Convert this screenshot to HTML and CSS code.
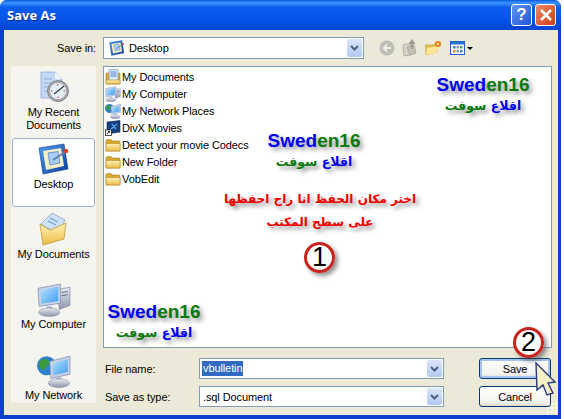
FILE: index.html
```html
<!DOCTYPE html>
<html>
<head>
    <title>Save As</title>
    <link rel="stylesheet" href="styles.css">
</head>
<body>
    <!-- shared icons, drawn once and reused at large and small sizes -->
    <svg class="icon-defs" width="0" height="0">
        <defs>
            <linearGradient id="gFolder" x1="0" y1="0" x2="0" y2="1">
                <stop offset="0" stop-color="#fff3b8"/>
                <stop offset="1" stop-color="#eebb45"/>
            </linearGradient>
            <linearGradient id="gScreen" x1="0" y1="0" x2="1" y2="1">
                <stop offset="0" stop-color="#b8e4ff"/>
                <stop offset="1" stop-color="#3f9bf0"/>
            </linearGradient>
            <linearGradient id="gGrey" x1="0" y1="0" x2="0" y2="1">
                <stop offset="0" stop-color="#e8ecf4"/>
                <stop offset="1" stop-color="#8d95aa"/>
            </linearGradient>
            <linearGradient id="gBlue" x1="0" y1="0" x2="1" y2="1">
                <stop offset="0" stop-color="#4f9cf0"/>
                <stop offset="1" stop-color="#0d3f9e"/>
            </linearGradient>
        </defs>
        <symbol id="i-folder" viewBox="0 0 16 16">
            <path d="M1 4 Q1 2.5 2.5 2.5 H6 L7.500 4 H14 Q15 4 15 5 V14 H1 Z" fill="#d9a72c" stroke="#a88122" stroke-width=".6"/>
            <path d="M1 6.500 H15 V14 H1 Z" fill="url(#gFolder)" stroke="#b58c28" stroke-width=".6"/>
        </symbol>
        <symbol id="i-mydocs-small" viewBox="0 0 16 16">
            <path d="M1 4 H15 V15 H1 Z" fill="#dcae3a" stroke="#a88122" stroke-width=".6"/>
            <path d="M4 .500 H13 V12 H4 Z" fill="#d8e6fa" stroke="#6f8fc2" stroke-width=".6"/>
            <path d="M5.500 3 H11.500 M5.500 5 H11.500 M5.500 7 H11.500" stroke="#4f7cc4" stroke-width=".9"/>
            <path d="M1 11 H15 V15 H1 Z" fill="url(#gFolder)" stroke="#b58c28" stroke-width=".6"/>
        </symbol>
        <symbol id="i-computer" viewBox="0 0 32 32">
            <path d="M19 6 L31 4 V21 L21 25 Z" fill="url(#gGrey)" stroke="#7b829a" stroke-width=".6"/>
            <path d="M23 9 L29 8 M23 12 L29 11" stroke="#6b7288" stroke-width="1"/>
            <path d="M1 5 L22 1 V19 L2 22 Z" fill="#c9d2e4" stroke="#7b8fb6" stroke-width=".7"/>
            <path d="M3.500 7 L20 3.500 V17 L4 19.500 Z" fill="url(#gScreen)"/>
            <path d="M9 22 H14 V26 H9 Z" fill="#aab1c4"/>
            <ellipse cx="11.500" cy="27.500" rx="10" ry="4" fill="url(#gGrey)" stroke="#848ba0" stroke-width=".5"/>
        </symbol>
        <symbol id="i-network" viewBox="0 0 32 32">
            <circle cx="9" cy="11" r="9" fill="#2f7fd0"/>
            <path d="M3 6 Q8 3 11 6 Q13 10 9 12 Q7 17 4 14 Q1 10 3 6 Z M13 13 Q17 13 15 18 Q12 19 13 13 Z" fill="#3c9a3c"/>
            <path d="M12 7 L31 2 V19 L13 23 Z" fill="#c9d2e4" stroke="#7b8fb6" stroke-width=".7"/>
            <path d="M14.500 9 L29 5 V17 L15 20 Z" fill="url(#gScreen)"/>
            <path d="M18 22 H23 V26 H18 Z" fill="#aab1c4"/>
            <ellipse cx="20.500" cy="27.500" rx="10" ry="4" fill="url(#gGrey)" stroke="#848ba0" stroke-width=".5"/>
        </symbol>
        <symbol id="i-desktop" viewBox="0 0 32 32">
            <path d="M1 5 L26 1 L30 26 L5 31 Z" fill="url(#gBlue)" stroke="#0c3a8e" stroke-width=".6"/>
            <path d="M5 8 L23 5 L26 23 L8 27 Z" fill="#f7efc4"/>
            <path d="M10 10 L20 8.500 L22 20 L12 22 Z" fill="#a9cdf4" stroke="#3f76c4" stroke-width=".7"/>
            <path d="M15 17 L27 9" stroke="#5f7fb4" stroke-width="2"/>
            <circle cx="28" cy="8" r="2.200" fill="#d8402a"/>
        </symbol>
    </svg>

    <div class="window">
        <div class="titlebar">
            <span class="title">Save As</span>
            <div class="caption-buttons">
                <div class="caption-btn help">?</div>
                <div class="caption-btn close">
                    <svg width="14" height="14" viewBox="0 0 14 14"><path d="M2 2 L12 12 M12 2 L2 12" stroke="#fff" stroke-width="2.600"/></svg>
                </div>
            </div>
        </div>

        <div class="client">
            <div class="top-row">
                <label class="save-in">Save in:</label>
                <div class="combo combo-wide">
                    <svg class="combo-icon" width="16" height="16"><use href="#i-desktop"/></svg>
                    <span class="combo-text">Desktop</span>
                    <div class="combo-arrow"><svg width="9" height="6" viewBox="0 0 9 6"><path d="M1 1 L4.500 4.500 L8 1" fill="none" stroke="#4d6185" stroke-width="2"/></svg></div>
                </div>
                <div class="toolbar">
                    <svg width="16" height="16" viewBox="0 0 16 16">
                        <circle cx="8" cy="8" r="7.500" fill="#bdbdb8"/>
                        <path d="M12 8 H5 M8 4.500 L4.500 8 L8 11.500" fill="none" stroke="#f1f1ec" stroke-width="1.800"/>
                    </svg>
                    <svg width="16" height="18" viewBox="0 0 16 18">
                        <path d="M1 6 L9 4 V16 L2 17 Z" fill="#d5d4cc" stroke="#a8a79f" stroke-width=".8"/>
                        <path d="M5 8 L12 6 L14 14 L8 16 Z" fill="#c3c2b9" stroke="#a3a29a" stroke-width=".8"/>
                        <path d="M10 10 V3 M7.500 5 L10 1.500 L12.500 5" fill="none" stroke="#9b9a92" stroke-width="1.800"/>
                    </svg>
                    <svg width="17" height="16" viewBox="0 0 17 16">
                        <path d="M0.500 5 H8 L12 3 V12 L1 15 Z" fill="#e6c04c" stroke="#c39a2a" stroke-width=".6"/>
                        <path d="M2 8 L14 6 L11 13 L1 15 Z" fill="#fbe795"/>
                        <circle cx="13" cy="4" r="3" fill="#ef7a22"/>
                        <circle cx="13" cy="4" r="1.200" fill="#ffe36a"/>
                    </svg>
                    <div class="views">
                        <svg width="15" height="14" viewBox="0 0 15 14">
                            <rect x=".5" y=".5" width="14" height="13" fill="#fff" stroke="#1f64c8"/>
                            <rect x="1" y="1" width="13" height="2.500" fill="#2a74d8"/>
                            <rect x="3" y="5" width="2.500" height="2.500" fill="#3b7fd8"/>
                            <rect x="6.500" y="5" width="2.500" height="2.500" fill="#8a97a8"/>
                            <rect x="10" y="5" width="2.500" height="2.500" fill="#4aa54a"/>
                            <rect x="3" y="9" width="2.500" height="2.500" fill="#e8882c"/>
                            <rect x="6.500" y="9" width="2.500" height="2.500" fill="#8a97a8"/>
                            <rect x="10" y="9" width="2.500" height="2.500" fill="#3b7fd8"/>
                        </svg>
                        <span class="views-arrow"></span>
                    </div>
                </div>
            </div>

            <div class="body-row">
                <div class="places">
                    <div class="place place-tall">
                        <svg width="32" height="32" viewBox="0 0 32 32">
                            <path d="M3 1 H17 L24 8 V27 H3 Z" fill="#c5d9f4" stroke="#86a5d4" stroke-width=".7"/>
                            <path d="M17 1 V8 H24 Z" fill="#eef4fd"/>
                            <path d="M6 8 H14 M6 12 H13 M6 16 H11 M6 20 H11" stroke="#8fb0de" stroke-width="1.200"/>
                            <circle cx="20" cy="20" r="10.500" fill="#a7a9ad" stroke="#6f7278" stroke-width=".8"/>
                            <circle cx="20" cy="20" r="8" fill="#e3eefb"/>
                            <path d="M20 20 L26 15 M20 20 L16 23" stroke="#3b3b40" stroke-width="1.200"/>
                            <path d="M20 13 V14.500 M27 20 H25.500 M20 27 V25.500 M13 20 H14.500" stroke="#d04a3a"/>
                        </svg>
                        <span>My Recent<br>Documents</span>
                    </div>
                    <div class="place selected">
                        <svg width="32" height="32"><use href="#i-desktop"/></svg>
                        <span>Desktop</span>
                    </div>
                    <div class="place">
                        <svg width="32" height="34" viewBox="0 0 32 34">
                            <path d="M3 12 L14 1 L27 8 L20 22 Z" fill="#cfe2f8" stroke="#7f9fce" stroke-width=".7"/>
                            <path d="M12 6 L20 10 M10 9 L18 13" stroke="#6f9bd8" stroke-width="1.200"/>
                            <path d="M2 12 L12 18 L28 11 L26 27 L5 33 Z" fill="url(#gFolder)" stroke="#b58c28" stroke-width=".7"/>
                        </svg>
                        <span>My Documents</span>
                    </div>
                    <div class="place place-pc">
                        <svg width="34" height="34"><use href="#i-computer"/></svg>
                        <span>My Computer</span>
                    </div>
                    <div class="place place-pc">
                        <svg width="34" height="34"><use href="#i-network"/></svg>
                        <span>My Network</span>
                    </div>
                </div>

                <div class="main">
                    <div class="list">
                        <div class="row"><svg width="16" height="16"><use href="#i-mydocs-small"/></svg>My Documents</div>
                        <div class="row"><svg width="16" height="16"><use href="#i-computer"/></svg>My Computer</div>
                        <div class="row"><svg width="16" height="16"><use href="#i-network"/></svg>My Network Places</div>
                        <div class="row">
                            <svg width="16" height="16" viewBox="0 0 16 16">
                                <path d="M2 2 L15 .5 V12 L2 14 Z" fill="#17407e" stroke="#0c2550" stroke-width=".6"/>
                                <path d="M5 10 L12 4 M7 4 L11 9" stroke="#58a0e6" stroke-width="1.400"/>
                                <rect x=".5" y="10" width="6" height="5.500" fill="#fff" stroke="#222" stroke-width=".8"/>
                                <path d="M2 14 L4.500 11.500 M3 11.500 H4.500 V13" fill="none" stroke="#111" stroke-width=".8"/>
                            </svg>DivX Movies
                        </div>
                        <div class="row"><svg width="16" height="16"><use href="#i-folder"/></svg>Detect your movie Codecs</div>
                        <div class="row"><svg width="16" height="16"><use href="#i-folder"/></svg>New Folder</div>
                        <div class="row"><svg width="16" height="16"><use href="#i-folder"/></svg>VobEdit</div>
                    </div>

                    <div class="file-form">
                        <label>File name:</label>
                        <div class="combo">
                            <span class="selected-text">vbulletin</span>
                            <div class="combo-arrow"><svg width="9" height="6" viewBox="0 0 9 6"><path d="M1 1 L4.500 4.500 L8 1" fill="none" stroke="#4d6185" stroke-width="2"/></svg></div>
                        </div>
                        <button class="btn btn-default">Save</button>
                        <label>Save as type:</label>
                        <div class="combo">
                            <span class="combo-text type-text">.sql Document</span>
                            <div class="combo-arrow"><svg width="9" height="6" viewBox="0 0 9 6"><path d="M1 1 L4.500 4.500 L8 1" fill="none" stroke="#4d6185" stroke-width="2"/></svg></div>
                        </div>
                        <button class="btn">Cancel</button>
                    </div>
                </div>
            </div>
        </div>

        <!-- text and marks added on top of the screenshot -->
        <div class="tag tag-a"><div class="brand"><span class="blue">Swed</span><span class="green">en16</span></div><div class="brand-ar" dir="rtl"><span class="blue">اقلاع</span> <span class="green">سوفت</span></div></div>
        <div class="tag tag-b"><div class="brand"><span class="blue">Swed</span><span class="green">en16</span></div><div class="brand-ar" dir="rtl"><span class="blue">اقلاع</span> <span class="green">سوفت</span></div></div>
        <div class="tag tag-c"><div class="brand"><span class="blue">Swed</span><span class="green">en16</span></div><div class="brand-ar" dir="rtl"><span class="blue">اقلاع</span> <span class="green">سوفت</span></div></div>
        <div class="note" dir="rtl">اختر مكان الحفظ انا راح احفظها<br>على سطح المكتب</div>
        <div class="step step-1">1</div>
        <div class="step step-2">2</div>
        <svg class="cursor" width="22" height="34" viewBox="0 0 22 34">
            <path d="M1 1 L20 20 L13 21 L18 31 L12 33 L8 23 L2 28 Z" fill="#f2f0c4" stroke="#2c3a80" stroke-width="1.400"/>
        </svg>
        <div class="grip"></div>
    </div>
</body>
</html>
```

FILE: styles.css
```css
body {
    margin: 0;
    background: #fff;
    font-family: "Liberation Sans", sans-serif;
    font-size: 11px;
    letter-spacing: -.1px;
    color: #000;
}
.icon-defs {
    position: absolute;
}
.window {
    position: relative;
    width: 561px;
    height: 419px;
    overflow: hidden;
    box-sizing: border-box;
    padding: 0 3px 4px 4px;
    display: flex;
    flex-direction: column;
    background: #0a3fd0;
    border-radius: 7px 7px 0 0;
}
.titlebar {
    height: 30px;
    margin: 0 -3px 0 -4px;
    padding: 0 5px 0 7px;
    flex: none;
    display: flex;
    align-items: center;
    justify-content: space-between;
    background: linear-gradient(#0a5be0 0, #3d95ff 3px, #0a5ff0 7px, #0552e6 20px, #0445d0 30px);
}
.title {
    font-family: "Open Sans", sans-serif;
    font-weight: bold;
    font-size: 13px;
    letter-spacing: 0;
    color: #fff;
    text-shadow: 1px 1px 0 #0a2f90;
}
.caption-buttons {
    display: flex;
    gap: 3px;
}
.caption-btn {
    width: 19px;
    height: 20px;
    border: 1px solid #fff;
    border-radius: 3px;
    display: flex;
    align-items: center;
    justify-content: center;
    color: #fff;
    font: bold 17px "Liberation Sans", sans-serif;
}
.help {
    background: linear-gradient(135deg, #5f94f0, #2255d8);
}
.close {
    background: linear-gradient(135deg, #ec8a68, #cf3c14);
}
.client {
    flex: 1;
    padding: 7px 6px 0 7px;
    background: #ece9d8;
    min-height: 0;
}
.top-row {
    display: flex;
    align-items: center;
    height: 22px;
}
.save-in {
    width: 85px;
    margin-right: 7px;
    text-align: right;
}
.combo {
    height: 21px;
    box-sizing: border-box;
    border: 1px solid #7f9db9;
    background: #fff;
    display: flex;
    align-items: center;
    position: relative;
}
.combo-wide {
    width: 261px;
    height: 22px;
    padding-left: 5px;
}
.combo-icon {
    margin-right: 4px;
}
.combo-text {
    line-height: 16px;
}
.type-text {
    padding-left: 3px;
}
.combo-arrow {
    position: absolute;
    right: 1px;
    top: 1px;
    bottom: 1px;
    width: 15px;
    border-radius: 2px;
    display: flex;
    align-items: center;
    justify-content: center;
    background: linear-gradient(#dbe6fc, #b3c8f2);
}
.toolbar {
    display: flex;
    align-items: center;
    gap: 7px;
    margin-left: 15px;
}
.views {
    display: flex;
    align-items: center;
    gap: 1px;
    margin-left: 1px;
}
.views-arrow {
    border: 3px solid transparent;
    border-top: 3px solid #000;
    border-bottom: 0;
    margin-left: 1px;
}
.body-row {
    display: flex;
    gap: 7px;
    margin-top: 7px;
}
.places {
    width: 85px;
    height: 337px;
    overflow: hidden;
    flex: none;
    background: #f5f4ee;
    display: flex;
    flex-direction: column;
    align-items: center;
    text-align: center;
    line-height: 13px;
}
.place {
    width: 83px;
    height: 70px;
    box-sizing: border-box;
    flex: none;
    padding-top: 5px;
    display: flex;
    flex-direction: column;
    align-items: center;
    gap: 2px;
}
.place-tall {
    height: 72px;
    gap: 3px;
}
.place-pc {
    padding-top: 6px;
    gap: 1px;
    height: 71px;
}
.selected {
    height: 69px;
    padding-top: 4px;
    gap: 3px;
    background: #fff;
    border: 1px solid #9eb2cf;
    border-radius: 3px;
}
.main {
    width: 449px;
}
.list {
    height: 282px;
    box-sizing: border-box;
    border: 1px solid #7f9db9;
    background: #fff;
    padding: 1px 0 0 1px;
}
.row {
    height: 17px;
    display: flex;
    align-items: center;
    gap: 1px;
}
.file-form {
    display: grid;
    grid-template-columns: 96px 245px 1fr;
    row-gap: 7px;
    grid-auto-rows: 21px;
    margin-top: 10px;
    align-items: center;
}
.file-form label {
    padding-left: 2px;
}
.selected-text {
    margin-left: 2px;
    padding: 0 1px;
    line-height: 15px;
    background: #316ac5;
    color: #fff;
}
.btn {
    width: 72px;
    height: 21px;
    margin-left: 35px;
    padding: 0;
    font: inherit;
    letter-spacing: inherit;
    color: #000;
    border: 1px solid #003c74;
    border-radius: 3px;
    background: linear-gradient(#fff, #f3f2ec 80%, #dcd8ce);
}
.btn-default {
    box-shadow: inset 0 0 0 2px #a9c4ec;
}
.tag {
    position: absolute;
    width: 94px;
    text-align: center;
    letter-spacing: 0;
}
.tag-a {
    left: 436px;
    top: 74px;
}
.tag-b {
    left: 267px;
    top: 130px;
}
.tag-c {
    left: 107px;
    top: 301px;
}
.brand {
    font: bold 19px/22px "Liberation Sans", sans-serif;
    text-shadow: 3px 3px 4px rgba(60, 60, 60, .55);
}
.brand-ar {
    font: bold 12.500px/20px "DejaVu Sans", sans-serif;
    text-shadow: 3px 3px 4px rgba(60, 60, 60, .55);
}
.blue {
    color: #0000f0;
}
.green {
    color: #0a7a0a;
}
.note {
    position: absolute;
    left: 215px;
    top: 188px;
    width: 210px;
    text-align: center;
    letter-spacing: 0;
    color: #f00000;
    font: bold 12px/23px "DejaVu Sans", sans-serif;
    text-shadow: 3px 3px 4px rgba(60, 60, 60, .55);
}
.step {
    position: absolute;
    width: 25px;
    height: 25px;
    border: 3px solid #c8231e;
    border-radius: 50%;
    background: radial-gradient(circle at 40% 35%, #fff 55%, #e4e4e4);
    box-shadow: 3px 3px 4px rgba(60, 60, 60, .55);
    text-align: center;
    letter-spacing: 0;
    font: 27px/25px "Liberation Sans", sans-serif;
}
.step-1 {
    left: 304px;
    top: 242px;
}
.step-2 {
    left: 513px;
    top: 327px;
}
.cursor {
    position: absolute;
    left: 535px;
    top: 362px;
}
.grip {
    position: absolute;
    right: 4px;
    bottom: 6px;
    width: 11px;
    height: 11px;
    background-image: radial-gradient(circle, #fff 1px, transparent 1.500px);
    background-size: 4px 4px;
}
```
